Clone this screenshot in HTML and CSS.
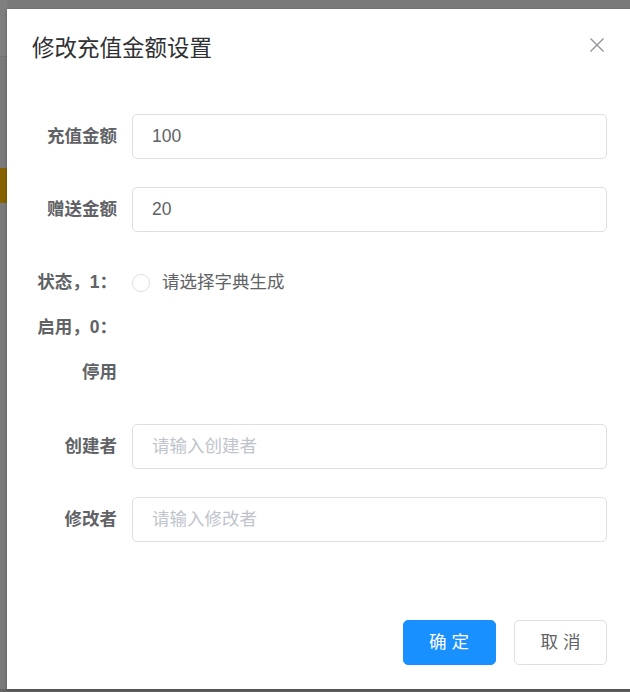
FILE: index.html
```html
<!DOCTYPE html>
<html lang="zh-CN">
<head>
<meta charset="utf-8">
<title>修改充值金额设置</title>
<link rel="stylesheet" href="styles.css">
</head>
<body>
<div class="page">
  <div class="side">
    <div class="side-head"></div>
    <div class="side-tag"></div>
  </div>
  <div class="dialog">
    <div class="dialog-header">
      <span class="dialog-title">修改充值金额设置</span>
      <button class="dialog-close" aria-label="Close">
        <svg viewBox="0 0 20 20" width="20" height="20"><path d="M3.5 3.5 L16.5 16.5 M16.5 3.5 L3.5 16.5" stroke="#909399" stroke-width="1.4" fill="none"/></svg>
      </button>
    </div>
    <div class="dialog-body">
      <div class="form-item">
        <label class="form-label">充值金额</label>
        <div class="form-content"><input class="input" value="100"></div>
      </div>
      <div class="form-item">
        <label class="form-label">赠送金额</label>
        <div class="form-content"><input class="input" value="20"></div>
      </div>
      <div class="form-item">
        <label class="form-label">状态，1：启用，0：停用</label>
        <div class="form-content">
          <label class="radio"><span class="radio-circle"></span><span class="radio-text">请选择字典生成</span></label>
        </div>
      </div>
      <div class="form-item">
        <label class="form-label">创建者</label>
        <div class="form-content"><input class="input" placeholder="请输入创建者"></div>
      </div>
      <div class="form-item">
        <label class="form-label">修改者</label>
        <div class="form-content"><input class="input" placeholder="请输入修改者"></div>
      </div>
    </div>
    <div class="dialog-footer">
      <button class="btn btn-primary">确 定</button>
      <button class="btn">取 消</button>
    </div>
  </div>
</div>
</body>
</html>
```

FILE: styles.css
```css
html, body {
  margin: 0;
  padding: 0;
  overflow: hidden;
  height: 692px;
}
body {
  background: #646464;
  font-family: "Liberation Sans", "Noto Sans CJK SC", sans-serif;
}
.page {
  display: flex;
  align-items: flex-start;
  background: #7a7a7a;
  height: 689px;
  width: 640px;
}
.side {
  width: 7px;
  flex: none;
  display: flex;
  flex-direction: column;
}
.side-head {
  height: 56px;
  background: #7f7f7f;
  border-bottom: 1px solid #737373;
}
.side-tag {
  margin-top: 111px;
  height: 35px;
  background: #866100;
}
.dialog {
  position: relative;
  margin-top: 9px;
  width: 625px;
  flex: none;
  height: 680px;
  background: #fff;
  box-shadow: 0 1px 3px rgba(0,0,0,0.3);
  box-sizing: border-box;
  display: flex;
  flex-direction: column;
}
.dialog-header {
  padding: 25px 25px 12.5px;
}
.dialog-title {
  font-size: 22.5px;
  line-height: 30px;
  color: #303133;
}
.dialog-close {
  position: absolute;
  top: 26px;
  right: 25px;
  width: 20px;
  height: 20px;
  padding: 0;
  border: 0;
  background: none;
  cursor: pointer;
}
.dialog-close svg { display: block; }
.dialog-body {
  padding: 37.5px 25px 10px;
  flex: 1;
}
.form-item {
  display: flex;
  margin-bottom: 28.2px;
}
.form-label {
  width: 100px;
  flex: none;
  box-sizing: border-box;
  padding-right: 15px;
  text-align: right;
  font-size: 17.5px;
  font-weight: bold;
  line-height: 45px;
  color: #606266;
}
.form-content {
  flex: 1;
  line-height: 45px;
}
.input {
  display: block;
  width: 100%;
  height: 45px;
  box-sizing: border-box;
  border: 1px solid #dcdfe6;
  border-radius: 5px;
  padding: 0 19px;
  font-family: "Liberation Sans", "Noto Sans CJK SC", sans-serif;
  font-size: 17.5px;
  color: #606266;
  outline: none;
  background: #fff;
}
.input::placeholder {
  color: #c0c4cc;
}
.radio {
  display: flex;
  align-items: center;
  height: 45px;
}
.radio-circle {
  width: 17.5px;
  height: 17.5px;
  box-sizing: border-box;
  border: 1px solid #dcdfe6;
  border-radius: 50%;
  background: #fff;
  flex: none;
}
.radio-text {
  padding-left: 12.5px;
  font-size: 17.5px;
  color: #606266;
}
.dialog-footer {
  padding: 12.5px 25px 24px;
  text-align: right;
}
.btn {
  display: inline-block;
  height: 45px;
  padding: 0 25px;
  border: 1px solid #dcdfe6;
  border-radius: 5px;
  background: #fff;
  color: #606266;
  font-family: "Liberation Sans", "Noto Sans CJK SC", sans-serif;
  font-size: 17.5px;
  line-height: 43px;
  min-width: 93px;
  margin-left: 14px;
  vertical-align: top;
}
.btn-primary {
  background: #1890ff;
  border-color: #1890ff;
  color: #fff;
  margin-left: 0;
}
```
